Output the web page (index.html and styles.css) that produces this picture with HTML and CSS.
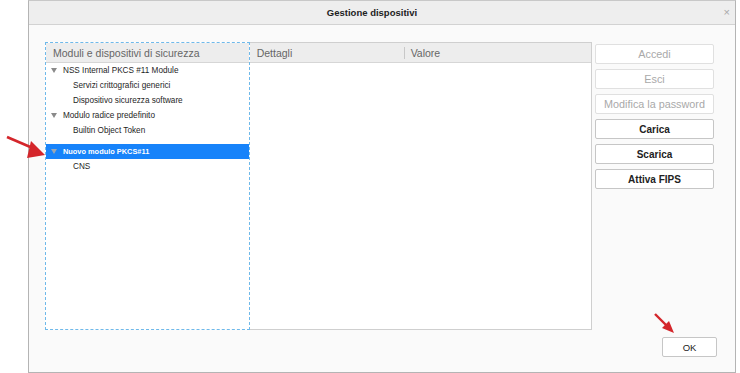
FILE: index.html
```html
<!DOCTYPE html>
<html lang="it">
    <head>
        <meta charset="UTF-8">
        <title>Gestione dispositivi</title>
        <link rel="stylesheet" href="styles.css">
    </head>
    <body>
        <div class="Dialog">
            <div class="TitleBar">
                <span class="Title">Gestione dispositivi</span>
                <span class="Close">&times;</span>
            </div>
            <div class="Body">
                <div class="Main">
                    <div class="Tree">
                        <div class="Head"><span>Moduli e dispositivi di sicurezza</span></div>
                        <div class="Row"><span class="Twisty"></span>NSS Internal PKCS #11 Module</div>
                        <div class="Row Child">Servizi crittografici generici</div>
                        <div class="Row Child">Dispositivo sicurezza software</div>
                        <div class="Row"><span class="Twisty"></span>Modulo radice predefinito</div>
                        <div class="Row Child">Builtin Object Token</div>
                        <div class="Row Selected"><span class="Twisty"></span>Nuovo modulo PKCS#11</div>
                        <div class="Row Child">CNS</div>
                    </div>
                    <div class="Details">
                        <div class="Head">
                            <span class="ColA">Dettagli</span>
                            <span class="ColB">Valore</span>
                        </div>
                    </div>
                    <div class="Buttons">
                        <button class="Btn" disabled>Accedi</button>
                        <button class="Btn" disabled>Esci</button>
                        <button class="Btn" disabled>Modifica la password</button>
                        <button class="Btn On">Carica</button>
                        <button class="Btn On">Scarica</button>
                        <button class="Btn On">Attiva FIPS</button>
                    </div>
                </div>
                <div class="Footer">
                    <button class="Btn Ok">OK</button>
                </div>
            </div>
        </div>
        <svg class="Arrow ArrowTree" width="50" height="30" viewBox="0 0 50 30">
            <line x1="2" y1="2" x2="30" y2="14" stroke="#d4262b" stroke-width="2.6"/>
            <polygon points="40,20 26,6 22,23" fill="#d4262b"/>
        </svg>
        <svg class="Arrow ArrowOk" width="30" height="30" viewBox="0 0 30 30">
            <line x1="2" y1="2" x2="14" y2="14" stroke="#d4262b" stroke-width="2.4"/>
            <polygon points="21,21 9,16 16,9" fill="#d4262b"/>
        </svg>
    </body>
</html>
```
FILE: styles.css
```css
* {
    box-sizing: border-box;
    margin: 0px;
    padding: 0px;
}
body {
    background-color: #FFFFFF;
    font-family: "Liberation Sans", Arial, Helvetica, sans-serif;
    height: 373px;
    overflow: hidden;
}
.Dialog {
    background-color: #FAFAFA;
    border: 1px solid #B4B4B4;
    border-top-color: #C8C8C8;
    display: flex;
    flex-direction: column;
    height: 373px;
    margin-left: 28px;
    width: 708px;
    .TitleBar {
        align-items: center;
        background-color: #EEEEEE;
        border-bottom: 1px solid #D2D2D2;
        display: flex;
        height: 24px;
        justify-content: center;
        padding-right: 20px;
        position: relative;
        .Title {
            color: #222222;
            font-size: 9.5px;
            font-weight: bold;
        }
        .Close {
            color: #A8A8A8;
            font-size: 11px;
            position: absolute;
            right: 5px;
            top: 5px;
        }
    }
    .Body {
        display: flex;
        flex: 1;
        flex-direction: column;
        padding: 17px 21px 0px 16px;
    }
}
.Main {
    display: flex;
    height: 288px;
}
.Head {
    align-items: center;
    background-color: #EDEDED;
    border-bottom: 1px solid #D6D6D6;
    color: #666666;
    display: flex;
    font-size: 10.5px;
    height: 20px;
}
.Tree {
    background-color: #FFFFFF;
    border: 1px dashed #6FB9EA;
    width: 205px;
    .Head {
        padding-left: 7px;
    }
    .Row {
        align-items: center;
        color: #1E1E1E;
        display: flex;
        font-size: 8.2px;
        height: 15px;
        padding-left: 5px;
    }
    .Child {
        padding-left: 27px;
    }
    .Selected {
        background-color: #1783FA;
        color: #FFFFFF;
        font-size: 7.4px;
        font-weight: bold;
        margin-top: 6px;
    }
    .Twisty {
        border-left: 3px solid transparent;
        border-right: 3px solid transparent;
        border-top: 5px solid #8A8A8A;
        height: 0px;
        margin-right: 6px;
        width: 0px;
    }
    .Selected .Twisty {
        border-top-color: #9AA6B4;
    }
}
.Details {
    background-color: #FFFFFF;
    border: 1px solid #CFCFCF;
    border-left: none;
    width: 343px;
    .Head {
        padding-left: 7px;
    }
    .ColA {
        width: 147px;
    }
    .ColB {
        border-left: 1px solid #C8C8C8;
        padding-left: 6px;
    }
}
.Buttons {
    display: flex;
    flex-direction: column;
    gap: 5px;
    margin-left: 3px;
    padding-top: 2px;
}
.Btn {
    background-color: #FFFFFF;
    border: 1px solid #C6C6C6;
    border-radius: 2px;
    color: #222222;
    font-family: "Liberation Sans", Arial, Helvetica, sans-serif;
    font-size: 10px;
    font-weight: bold;
    height: 20px;
    width: 119px;
}
.Btn:disabled {
    border-color: #E0E0E0;
    color: #A9A9A9;
    font-size: 10.8px;
    font-weight: normal;
}
.Footer {
    display: flex;
    justify-content: flex-end;
    padding-top: 7px;
    .Ok {
        font-size: 9.5px;
        font-weight: normal;
        margin-right: -3px;
        width: 55px;
    }
}
.Arrow {
    position: absolute;
}
.ArrowTree {
    left: 5px;
    top: 135px;
}
.ArrowOk {
    left: 653px;
    top: 312px;
}
```
